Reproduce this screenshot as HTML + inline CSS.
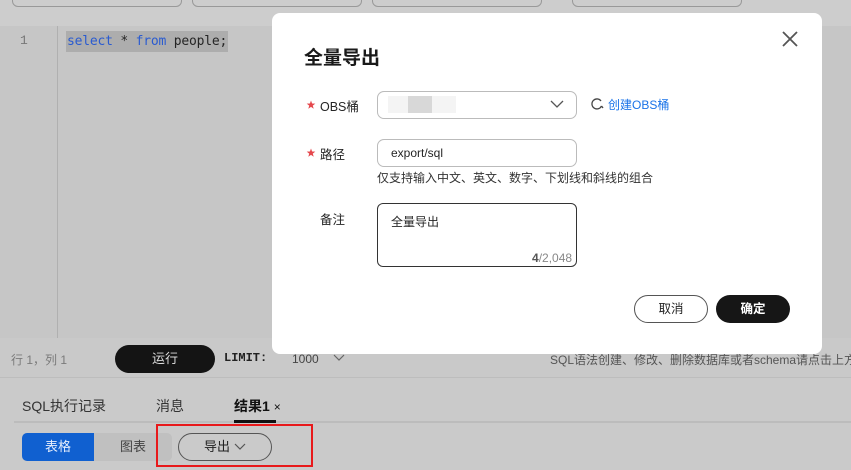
<!DOCTYPE html><html><head><meta charset="utf-8"><style>
*{box-sizing:border-box;margin:0;padding:0}
body{width:851px;height:470px;overflow:hidden;background:#cacaca;font-family:"Liberation Sans","Noto Sans CJK SC",sans-serif;position:relative;font-size:13px;color:#252525}
.a{position:absolute;white-space:nowrap}
</style></head><body>
<div class="a" style="left:0;top:0;width:851px;height:26px;background:#cdcdcd"></div>
<div class="a" style="left:12px;top:-8px;width:170px;height:15px;border:1px solid #999;border-radius:6px"></div>
<div class="a" style="left:192px;top:-8px;width:170px;height:15px;border:1px solid #999;border-radius:6px"></div>
<div class="a" style="left:372px;top:-8px;width:170px;height:15px;border:1px solid #999;border-radius:6px"></div>
<div class="a" style="left:572px;top:-8px;width:170px;height:15px;border:1px solid #999;border-radius:6px"></div>
<div class="a" style="left:0;top:26px;width:851px;height:312px;background:#c6c6c6"></div>
<div class="a" style="left:57px;top:26px;width:1px;height:312px;background:#b0b0b0"></div>
<div class="a" style="left:20px;top:33px;font-family:'Liberation Mono',monospace;color:#777;font-size:13px">1</div>
<div class="a" style="left:66px;top:31px;height:21px;line-height:21px;padding:0 1px;background:#adadad;font-family:'DejaVu Sans Mono','Liberation Mono',monospace;font-size:13px;letter-spacing:-0.2px"><span style="color:#2a5bd0">select</span> * <span style="color:#2a5bd0">from</span> people;</div>
<div class="a" style="left:0;top:338px;width:851px;height:40px;background:#c9c9c9;border-bottom:1px solid #bdbdbd"></div>
<div class="a" style="left:11px;top:351px;color:#7a7a7a;font-size:12px">行 1，列 1</div>
<div class="a" style="left:115px;top:345px;width:100px;height:28px;background:#141414;border-radius:14px;color:#ddd;text-align:center;line-height:28px">运行</div>
<div class="a" style="left:224px;top:351px;font-family:'Liberation Mono',monospace;font-weight:bold;font-size:12px;color:#222">LIMIT:</div>
<div class="a" style="left:292px;top:352px;font-size:12px;color:#444">1000</div>
<svg class="a" style="left:333px;top:354px" width="12" height="8"><path d="M1 1L6 6L11 1" fill="none" stroke="#666" stroke-width="1.2"/></svg>
<div class="a" style="left:550px;top:351px;font-size:12px;color:#555">SQL语法创建、修改、删除数据库或者schema请点击上方</div>
<div class="a" style="left:22px;top:396px;font-size:14px;color:#333">SQL执行记录</div>
<div class="a" style="left:156px;top:396px;font-size:14px;color:#333">消息</div>
<div class="a" style="left:234px;top:396px;font-size:14px;color:#111;font-weight:bold">结果1 <span style="font-weight:normal;font-size:12px">×</span></div>
<div class="a" style="left:14px;top:421px;width:837px;height:2px;background:#bcbcbc"></div>
<div class="a" style="left:234px;top:420px;width:42px;height:3px;background:#111"></div>
<div class="a" style="left:22px;top:433px;width:72px;height:28px;background:#1060d0;border-radius:5px 0 0 5px;color:#e6eefc;text-align:center;line-height:28px">表格</div>
<div class="a" style="left:94px;top:433px;width:78px;height:28px;background:#c0c0c0;border-radius:0 5px 5px 0;color:#444;text-align:center;line-height:28px">图表</div>
<div class="a" style="left:156px;top:424px;width:157px;height:43px;border:2px solid #e8191b"></div>
<div class="a" style="left:178px;top:433px;width:94px;height:28px;border:1px solid #555;border-radius:14px;line-height:26px;padding-left:25px;color:#222">导出</div>
<svg class="a" style="left:234px;top:443px" width="12" height="8"><path d="M1 1L6 6L11 1" fill="none" stroke="#555" stroke-width="1.2"/></svg>

<div class="a" style="left:272px;top:13px;width:550px;height:341px;background:#fff;border-radius:8px"></div>
<div class="a" style="left:304px;top:43px;font-size:19px;font-weight:bold;color:#1a1a1a">全量导出</div>
<svg class="a" style="left:780px;top:29px" width="20" height="20"><path d="M3 3L17 17M17 3L3 17" stroke="#555" stroke-width="1.8"/></svg>
<svg class="a" style="left:306px;top:100px" width="10" height="10"><path d="M5 0.5L6.1 3.5L9.3 3.6L6.8 5.6L7.7 8.7L5 6.9L2.3 8.7L3.2 5.6L0.7 3.6L3.9 3.5Z" fill="#e5484d"/></svg>
<div class="a" style="left:320px;top:96px;font-size:12.5px">OBS桶</div>
<div class="a" style="left:377px;top:91px;width:200px;height:28px;border:1px solid #bbb;border-radius:7px"></div>
<div class="a" style="left:388px;top:96px;width:68px;height:17px;background:#f4f4f4"></div>
<div class="a" style="left:408px;top:96px;width:24px;height:17px;background:#d8d8d8"></div>
<svg class="a" style="left:550px;top:99px" width="14" height="10"><path d="M1 2L7 8L13 2" fill="none" stroke="#555" stroke-width="1.3"/></svg>
<svg class="a" style="left:590px;top:97px" width="14" height="14"><path d="M11.5 9A5 5 0 1 1 11 4" fill="none" stroke="#444" stroke-width="1.3"/><path d="M11.5 9L13 11" stroke="#444" stroke-width="1.3"/></svg>
<div class="a" style="left:608px;top:96px;color:#1a73e8;font-size:12px">创建OBS桶</div>
<svg class="a" style="left:306px;top:148px" width="10" height="10"><path d="M5 0.5L6.1 3.5L9.3 3.6L6.8 5.6L7.7 8.7L5 6.9L2.3 8.7L3.2 5.6L0.7 3.6L3.9 3.5Z" fill="#e5484d"/></svg>
<div class="a" style="left:320px;top:144px;font-size:12.5px">路径</div>
<div class="a" style="left:377px;top:139px;width:200px;height:28px;border:1px solid #bbb;border-radius:7px;padding-left:13px;line-height:26px;font-size:12px">export/sql</div>
<div class="a" style="left:377px;top:169px;font-size:12px;color:#333">仅支持输入中文、英文、数字、下划线和斜线的组合</div>
<div class="a" style="left:320px;top:209px;font-size:12.5px">备注</div>
<div class="a" style="left:377px;top:203px;width:200px;height:64px;border:1px solid #333;border-radius:6px;padding:9px 13px;font-size:12px">全量导出</div>
<div class="a" style="left:532px;top:251px;font-size:12px;color:#888"><b style="color:#555">4</b>/2,048</div>
<div class="a" style="left:634px;top:295px;width:74px;height:28px;border:1px solid #555;border-radius:14px;text-align:center;line-height:26px;font-size:12.5px">取消</div>
<div class="a" style="left:716px;top:295px;width:74px;height:28px;background:#161616;border-radius:14px;text-align:center;line-height:28px;font-size:12.5px;color:#fff;font-weight:bold">确定</div>
</body></html>
